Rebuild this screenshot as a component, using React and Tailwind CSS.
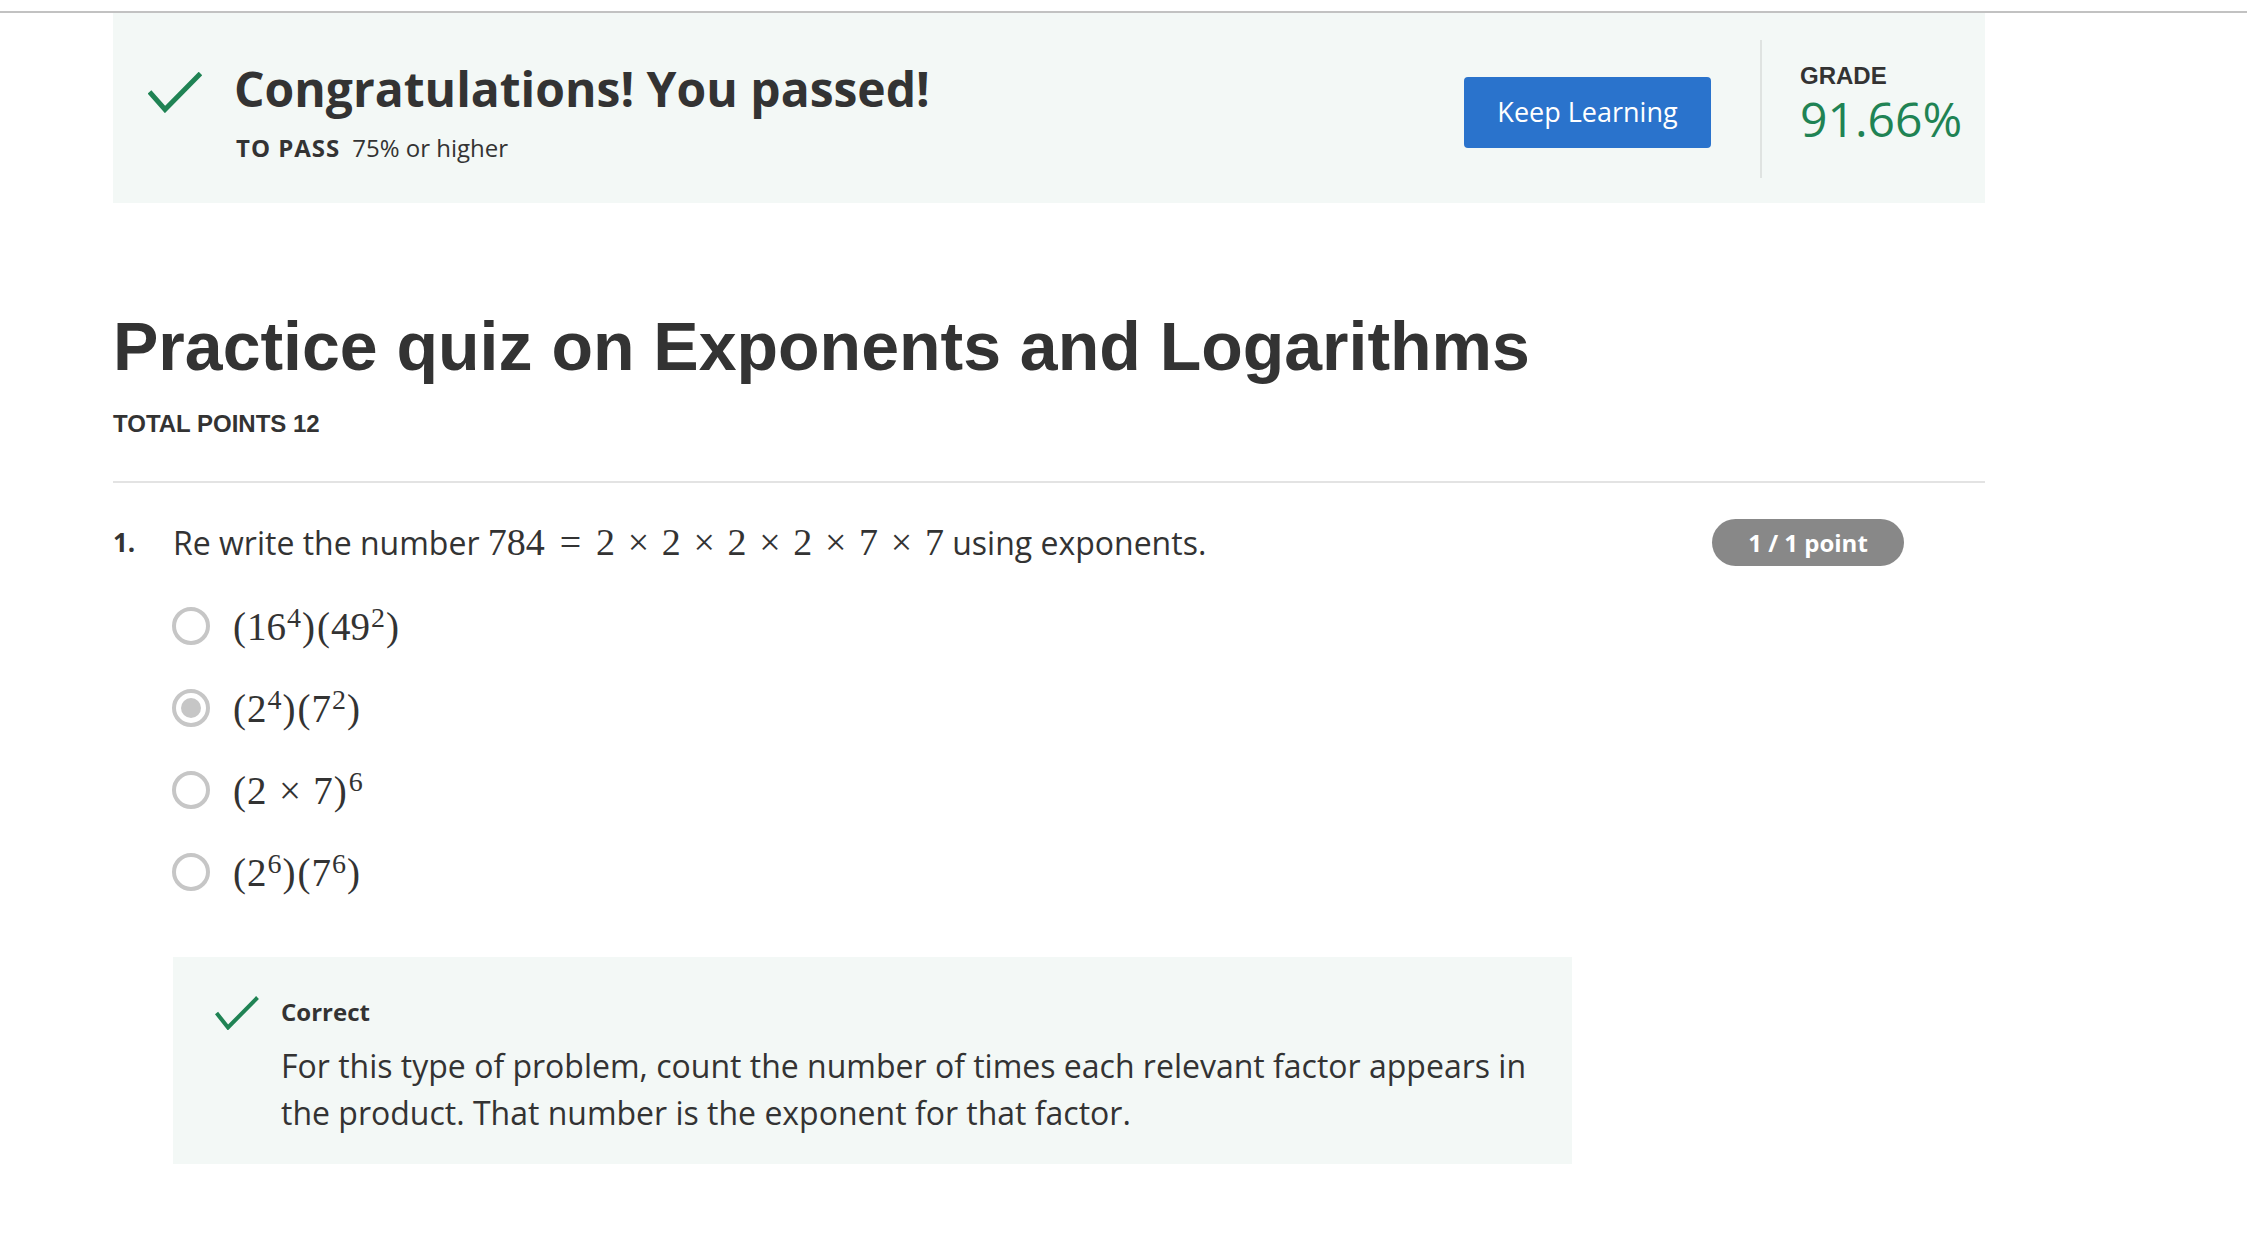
import React from "react";

function Check({ className, w, h, points, sw }) {
  return (
    <svg className={className} width={w} height={h} viewBox={`0 0 ${w} ${h}`} fill="none">
      <polyline points={points} stroke="#1f8354" strokeWidth={sw} strokeLinecap="butt" strokeLinejoin="miter" />
    </svg>
  );
}

function Radio({ selected }) {
  return (
    <div className="flex h-[38px] w-[38px] shrink-0 items-center justify-center rounded-full border-[4px] border-[#c6c6c6] bg-white">
      {selected && <div className="h-[20px] w-[20px] rounded-full bg-[#c6c6c6]" />}
    </div>
  );
}

function Sup({ children }) {
  return <span className="ml-[1px] align-[13px] text-[28px] leading-none">{children}</span>;
}

function P({ children }) {
  return <span className="mx-[1px]">{children}</span>;
}

function Op({ children, wide }) {
  return (
    <span className={`inline-block text-center ${wide ? "mx-[10.6px]" : "mx-[8.4px]"} w-[30px]`}>{children}</span>
  );
}

const options = [
  { sel: false, content: (<><P>(</P>16<Sup>4</Sup><P>)</P><P>(</P>49<Sup>2</Sup><P>)</P></>) },
  { sel: true, content: (<><P>(</P>2<Sup>4</Sup><P>)</P><P>(</P>7<Sup>2</Sup><P>)</P></>) },
  { sel: false, content: (<><P>(</P>2<Op>×</Op>7<P>)</P><Sup>6</Sup></>) },
  { sel: false, content: (<><P>(</P>2<Sup>6</Sup><P>)</P><P>(</P>7<Sup>6</Sup><P>)</P></>) },
];

export default function App() {
  return (
    <div className="min-h-[1258px] bg-white text-[#333] font-['Open_Sans',sans-serif]">
      <div className="h-[13px] border-b-2 border-[#c2c2c2]" />
      <div className="ml-[113px] w-[1872px]">
        {/* Banner */}
        <div className="flex h-[190px] bg-[#f3f8f6]">
          <div className="flex flex-1 pl-[35px]">
            <Check className="mt-[59px] shrink-0" w={54} h={41} points="1.5,20 17,37.5 52.5,1.5" sw={5} />
            <div className="ml-[32px] flex flex-col pt-[48px]">
              <h2 className="text-[48px] font-bold leading-[56px] text-[#333]">Congratulations! You passed!</h2>
              <div className="ml-[2px] mt-[15px] flex items-center gap-[12px] text-[24px] leading-[32px] text-[#333]">
                <span className="font-bold tracking-[1px]">TO PASS</span>
                <span>75% or higher</span>
              </div>
            </div>
          </div>
          <button className="mt-[64px] h-[71px] w-[247px] rounded-[4px] bg-[#2a73cc] text-[27px] text-white">
            Keep Learning
          </button>
          <div className="ml-[49px] mt-[27px] h-[138px] w-[2px] bg-[#dfe3e1]" />
          <div className="ml-[38px] w-[185px] pt-[49px]">
            <div className="font-['Liberation_Sans',Arial,sans-serif] text-[24px] font-bold leading-[28px] text-[#333]">GRADE</div>
            <div className="mt-[1px] text-[48px] leading-[56px] text-[#1f8354]">91.66%</div>
          </div>
        </div>

        {/* Title */}
        <h1 className="mt-[104px] font-['Liberation_Sans',Arial,sans-serif] text-[68px] font-bold leading-[78px] text-[#333]">
          Practice quiz on Exponents and Logarithms
        </h1>
        <div className="mt-[25px] font-['Liberation_Sans',Arial,sans-serif] text-[24px] font-bold leading-[28px] text-[#333]">
          TOTAL POINTS 12
        </div>
        <div className="mt-[43px] h-[2px] bg-[#e3e3e3]" />

        {/* Question */}
        <div className="mt-[36px] flex h-[47px] w-[1791px] items-center">
          <span className="w-[60px] text-[26px] font-bold text-[#333]">1.</span>
          <div className="whitespace-nowrap text-[32px] text-[#333]">
            Re write the number{" "}
            <span className="font-['Liberation_Serif','Times_New_Roman',serif] text-[38px]">
              784<Op wide>=</Op>2<Op>×</Op>2<Op>×</Op>2<Op>×</Op>2<Op>×</Op>7<Op>×</Op>7
            </span>{" "}
            using exponents.
          </div>
          <div className="ml-auto flex h-[47px] w-[192px] items-center justify-center rounded-full bg-[#888888] text-[24px] font-bold text-white">
            1 / 1 point
          </div>
        </div>

        {/* Options */}
        <div className="mt-[19px] flex flex-col pl-[59px]">
          {options.map((o, i) => (
            <div key={i} className="flex h-[82px] items-center">
              <Radio selected={o.sel} />
              <div className="ml-[22px] whitespace-nowrap font-['Liberation_Serif','Times_New_Roman',serif] text-[39px] leading-[47px] text-[#333]">
                {o.content}
              </div>
            </div>
          ))}
        </div>

        {/* Feedback */}
        <div className="ml-[60px] mt-[44px] flex h-[207px] w-[1399px] bg-[#f3f8f6]">
          <Check className="ml-[42px] mt-[39px] shrink-0" w={44} h={34} points="1.5,17 13,31.5 42.5,1.5" sw={4} />
          <div className="ml-[22px] flex flex-col pt-[39px]">
            <div className="text-[24px] font-bold leading-[32px] text-[#333]">Correct</div>
            <p className="mt-[14px] whitespace-nowrap text-[32px] leading-[47px] text-[#333]">
              For this type of problem, count the number of times each relevant factor appears in
              <br />
              the product. That number is the exponent for that factor.
            </p>
          </div>
        </div>
      </div>
    </div>
  );
}
